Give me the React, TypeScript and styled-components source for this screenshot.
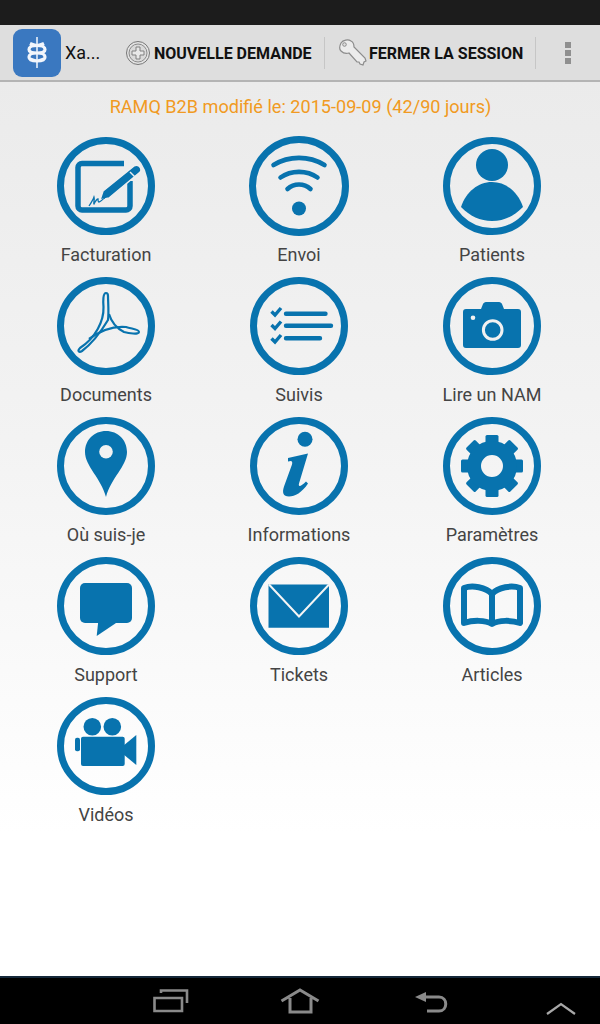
import React from "react";
import styled, { createGlobalStyle } from "styled-components";

const Global = createGlobalStyle`
  html, body { margin: 0; padding: 0; background: #000; }
  * { box-sizing: border-box; }
`;
const Page = styled.div`
  width: 600px; height: 1024px; display: flex; flex-direction: column; overflow: hidden;
  font-family: Roboto, "Liberation Sans", sans-serif;
`;
const StatusBar = styled.div`height: 25px; background: #1c1c1c; flex: none;`;
const ActionBar = styled.header`
  height: 57px; flex: none; display: flex; align-items: center; background: #dedede;
  border-bottom: 2px solid #b4b4b4; padding: 1px 0 0 13px;
`;
const Logo = styled.svg`width: 48px; height: 48px; flex: none; display: block;`;
const AppTitle = styled.span`font-size: 18px; color: #111; margin: 0 0 0 4px; width: 60px; line-height: 24px;`;
const ActionButton = styled.div<{ $w: number }>`
  display: flex; align-items: center; height: 100%; width: ${p => p.$w}px; flex: none;
`;
const PlusIcon = styled.svg`width: 26px; height: 26px; flex: none; margin-right: 3px;`;
const KeyIcon = styled.svg`width: 30px; height: 30px; flex: none; margin: 0 1px 0 13px;`;
const ActionLabel = styled.span`font-size: 16px; font-weight: 700; color: #111; white-space: nowrap;`;
const Divider = styled.span`width: 1px; height: 32px; background: #c6c6c6; flex: none;`;
const Overflow = styled.div`display: flex; flex-direction: column; gap: 2px; margin-left: 29px;`;
const Dot = styled.span`width: 6px; height: 6px; background: #8f8f8f; display: block;`;
const Content = styled.main`
  flex: 1; display: flex; flex-direction: column; align-items: stretch; padding: 13px 9px 0;
  background: linear-gradient(#ebebeb 0, #f3f3f3 40%, #ffffff 84%);
`;
const Notice = styled.div`
  text-align: center; color: #f19a22; font-size: 18.1px; line-height: 24px; height: 41px;
  margin-right: -1px;
`;
const Grid = styled.div`display: grid; grid-template-columns: repeat(3, 193px); grid-auto-rows: 140px;`;
const Tile = styled.div`display: flex; flex-direction: column; align-items: center;`;
const IconSlot = styled.div`height: 100px; display: flex; align-items: center; justify-content: center; flex: none;`;
const Label = styled.div`font-size: 18px; line-height: 20px; color: #444; margin-top: 9px; margin-left: 1px; white-space: nowrap;`;
const NavBar = styled.nav`
  height: 48px; flex: none; background: #000; border-top: 2px solid #14283a;
  display: flex; align-items: center; gap: 90px; padding: 0 0 0 150px;
`;
const NavIcon = styled.svg`width: 40px; height: 40px; flex: none; display: block;`;
const RoundIcon = styled.svg<{ $s: number }>`width: ${p => p.$s}px; height: ${p => p.$s}px; display: block;`;

const B = "#0873ae";
const gearTeeth = [0, 45, 90, 135, 180, 225, 270, 315];

const glyphs: Record<string, React.ReactNode> = {
  facturation: <>
    <path d="M68 27.500H26a4 4 0 0 0-4 4V70a4 4 0 0 0 4 4h44a4 4 0 0 0 4-4V45" fill="none" stroke={B} strokeWidth="5.500" />
    <path d="M44 64l3-9 31-25c3-2 7 0 7 4 0 1-.5 2-2 3L53 62z" fill={B} stroke="#efefef" strokeWidth="1.500" />
    <path d="M74 36l6 6" stroke="#efefef" strokeWidth="1.400" />
    <path d="M33 70c2-3 4-6 5-9 1 3-1 6 0 7 1-2 3-5 4-5 0 2 0 3 1 3 2 0 3-3 6-4" fill="none" stroke={B} strokeWidth="1.300" />
  </>,
  envoi: <>
    <path d="M24.500 29C40 19.500 60 19.500 75.500 29" fill="none" stroke={B} strokeWidth="4.600" strokeLinecap="round" />
    <path d="M31.500 41.500C42 34 58 34 68.500 41.500" fill="none" stroke={B} strokeWidth="4.600" strokeLinecap="round" />
    <path d="M38.500 53C45 47 55 47 61.500 53" fill="none" stroke={B} strokeWidth="4.600" strokeLinecap="round" />
    <circle cx="50" cy="72.500" r="7" fill={B} />
  </>,
  patients: <>
    <circle cx="50" cy="29" r="16" fill={B} />
    <path d="M19 71C24 56 36 46 50 46s26 10 31 25c-9 9-19 14-31 14s-22-5-31-14z" fill={B} />
  </>,
  documents: <>
    <path d="M50 17c-3 0-3 8-2.500 14 .5 14-8 31-23.500 41-3 3-1 5 2 3 12-9 20-21 26-31 1-7 0-19 0-24 0-2-1-3-2-3z" fill="none" stroke={B} strokeWidth="2.200" />
    <path d="M33 63c12-9 25-13 37-12 6 2 13 2 13 5s-11 1-15 0c-6-3-12-8-15-18" fill="none" stroke={B} strokeWidth="2.200" />
  </>,
  suivis: <>
    <path d="M37 37.700H76.500M37 49.700H82M37 62.300H71" stroke={B} strokeWidth="4.400" strokeLinecap="round" />
    <path d="M22.500 35.500l3.500 3.500 6-7M22.500 49l3.500 3.500 6-7M22.500 62.500l3.500 3.500 6-7" fill="none" stroke={B} strokeWidth="3.400" />
  </>,
  camera: <>
    <path d="M24 33h15l2-5c.5-1 1.500-2 3-2h13c1.500 0 2.500 1 3 2l2 5h14c2 0 3 1 3 3v33c0 2-1 3-3 3H24c-2 0-3-1-3-3V36c0-2 1-3 3-3z" fill={B} />
    <circle cx="50.700" cy="54" r="9.300" fill="none" stroke="#f1f1f1" strokeWidth="3" />
    <circle cx="31" cy="41.700" r="2.300" fill="#f1f1f1" />
  </>,
  pin: <>
    <path d="M50 15C38 15 29 24 29 36c0 14 16 26 21 45 5-19 21-31 21-45 0-12-9-21-21-21z" fill={B} />
    <circle cx="50" cy="35.700" r="6.800" fill="#f2f2f2" />
  </>,
  info: <>
    <circle cx="56" cy="23.300" r="7.500" fill={B} />
    <path d="M39 42l20-4.500-9 30c-1 4 2 3 7-2l2 2c-6 9-13 13-19 13s-7-4-5-10l8-22c1-4-1-4-4-3z" fill={B} />
  </>,
  gear: <>
    {gearTeeth.map(a => <rect key={a} x="43.500" y="19" width="13" height="12" rx="1.500" fill={B} transform={`rotate(${a} 50 50)`} />)}
    <circle cx="50" cy="50" r="18" fill="none" stroke={B} strokeWidth="14" />
  </>,
  support: <>
    <rect x="24" y="27" width="52" height="40" rx="5" fill={B} />
    <path d="M42.300 65L40.700 80 63 65z" fill={B} />
  </>,
  tickets: <>
    <path d="M19.500 28.500h60.500v43.200H19.500z" fill={B} />
    <path d="M20 28.500L50 60.500 80 28.500" fill="none" stroke="#f5f5f5" strokeWidth="2" />
  </>,
  articles: <>
    <path d="M50 38c-6-7-20-9-28-6v35c9-3 21-3 28 1 7-4 19-4 28-1V32c-8-3-22-1-28 6zM50 38v30" fill="none" stroke={B} strokeWidth="6" strokeLinejoin="round" />
  </>,
  videos: <>
    <circle cx="36.300" cy="30.700" r="8.800" fill={B} />
    <circle cx="56.300" cy="30.700" r="8.800" fill={B} />
    <rect x="25" y="40.700" width="43.700" height="29.300" rx="2" fill={B} />
    <path d="M67 50l13.300-11v30L67 58z" fill={B} />
    <rect x="19" y="41.700" width="5" height="13.500" rx="2" fill={B} />
  </>,
};

const tiles: { label: string; icon: string; size?: number }[] = [
  { label: "Facturation", icon: "facturation" },
  { label: "Envoi", icon: "envoi", size: 100 },
  { label: "Patients", icon: "patients" },
  { label: "Documents", icon: "documents" },
  { label: "Suivis", icon: "suivis" },
  { label: "Lire un NAM", icon: "camera" },
  { label: "Où suis-je", icon: "pin" },
  { label: "Informations", icon: "info" },
  { label: "Paramètres", icon: "gear" },
  { label: "Support", icon: "support" },
  { label: "Tickets", icon: "tickets" },
  { label: "Articles", icon: "articles" },
  { label: "Vidéos", icon: "videos" },
];

export default function App() {
  return (
    <Page>
      <Global />
      <StatusBar />
      <ActionBar>
        <Logo viewBox="0 0 48 48">
          <rect x="0" y="0" width="48" height="48" rx="9" fill="#3a78c0" />
          <path d="M24 8V39" stroke="#e8f0fa" strokeWidth="1.600" />
          <path d="M31 14.500c-2 1-4 2-7 2-4 0-8 1-8 4 0 2.500 4 3.500 8 3.500s8 1 8 4c0 3-4 4-8 4-3 0-5-1-7-2M17 14.500c2 1 4 2 7 2 4 0 8 1 8 4 0 2.500-4 3.500-8 3.500s-8 1-8 4c0 3 4 4 8 4 3 0 5-1 7-2" fill="none" stroke="#f2f6fc" strokeWidth="3.200" />
        </Logo>
        <AppTitle>Xa...</AppTitle>
        <ActionButton $w={199}>
          <PlusIcon viewBox="0 0 26 26">
            <circle cx="13" cy="13" r="11.500" fill="#e4e4e4" stroke="#777" strokeWidth="1" />
            <circle cx="13" cy="13" r="9" fill="#dadada" stroke="#8a8a8a" strokeWidth="1" />
            <path d="M11 7h4v4h4v4h-4v4h-4v-4H7v-4h4z" fill="#e8e8e8" stroke="#808080" strokeWidth="1" />
          </PlusIcon>
          <ActionLabel>NOUVELLE DEMANDE</ActionLabel>
        </ActionButton>
        <Divider />
        <ActionButton $w={210}>
          <KeyIcon viewBox="0 0 30 30">
            <path d="M3 5c2-3 7-4 10-2 2 1 3 4 3 6l11 11 1 3-2 1-1 3-3-1-1-2-2 0-8-9c-3 1-6 0-8-2-2-2-1-6 0-8z" fill="#ececec" stroke="#8c8c8c" strokeWidth="1.200" />
            <circle cx="6.500" cy="6.500" r="1.800" fill="#dedede" stroke="#8c8c8c" strokeWidth="1" />
          </KeyIcon>
          <ActionLabel>FERMER LA SESSION</ActionLabel>
        </ActionButton>
        <Divider />
        <Overflow><Dot /><Dot /><Dot /></Overflow>
      </ActionBar>
      <Content>
        <Notice>RAMQ B2B modifié le: 2015-09-09 (42/90 jours)</Notice>
        <Grid>
          {tiles.map(t => {
            const s = t.size ?? 98;
            return (
              <Tile key={t.label}>
                <IconSlot>
                  <RoundIcon $s={s} viewBox={`${50 - s / 2} ${50 - s / 2} ${s} ${s}`}>
                    <circle cx="50" cy="50" r={s / 2 - 3.5} fill="none" stroke={B} strokeWidth="7" />
                    {glyphs[t.icon]}
                  </RoundIcon>
                </IconSlot>
                <Label>{t.label}</Label>
              </Tile>
            );
          })}
        </Grid>
      </Content>
      <NavBar>
        <NavIcon viewBox="0 0 40 40">
          <path d="M4.500 17H32V30H4.500zM11 12V9.500H37V22" fill="none" stroke="#8a8a8a" strokeWidth="2.600" />
        </NavIcon>
        <NavIcon viewBox="0 0 40 40">
          <path d="M1.500 20L20 9l18.500 11M10 17v14h21V17" fill="none" stroke="#8a8a8a" strokeWidth="3" />
        </NavIcon>
        <NavIcon viewBox="0 0 40 40">
          <path d="M16 11l-11 5 11 5z" fill="#8a8a8a" />
          <path d="M12 16h17c9 0 9 14 0 14H17" fill="none" stroke="#8a8a8a" strokeWidth="3" />
        </NavIcon>
        <NavIcon viewBox="0 0 40 40">
          <path d="M7 33L21 23l14 10" fill="none" stroke="#a8a8a8" strokeWidth="2.200" />
        </NavIcon>
      </NavBar>
    </Page>
  );
}
